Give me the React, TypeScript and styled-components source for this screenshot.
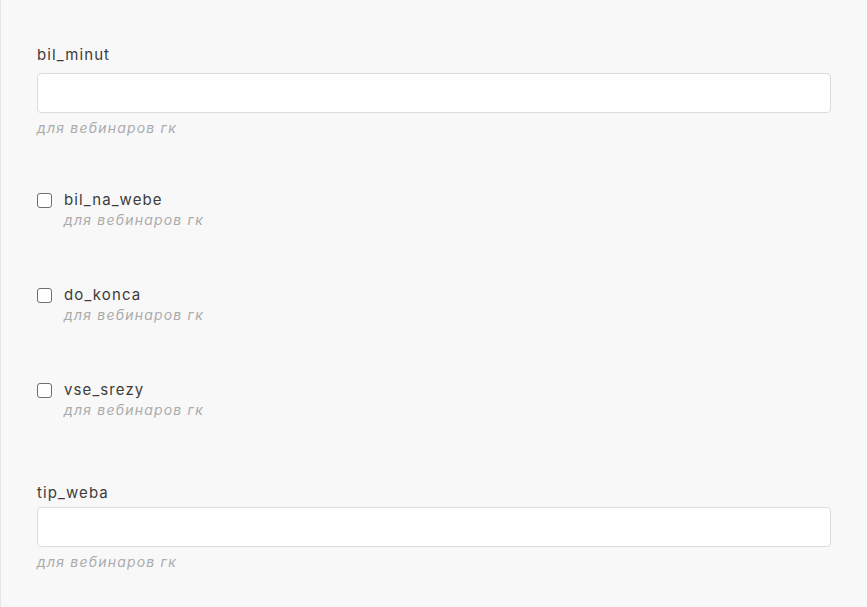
import React from 'react';
import styled, { createGlobalStyle } from 'styled-components';

const GlobalStyle = createGlobalStyle`
  html, body {
    margin: 0;
    padding: 0;
    background: #f8f8f8;
  }
  body {
    font-family: Inter, "Noto Sans", sans-serif;
    color: #3c3c3c;
  }
`;

const Panel = styled.div`
  box-sizing: border-box;
  min-height: 607px;
  border-left: 1px solid #e6e6e6;
  padding: 45px 36px 0 36px;
  display: flex;
  flex-direction: column;
`;

const Field = styled.div<{ $gap: number }>`
  display: flex;
  flex-direction: column;
  margin-bottom: ${({ $gap }) => $gap}px;
`;

const Label = styled.label<{ $tight?: boolean }>`
  font-size: 15px;
  line-height: 20px;
  letter-spacing: 1.1px;
  font-weight: 400;
  color: #3c3c3c;
  margin-bottom: ${({ $tight }) => ($tight ? 4 : 8)}px;
`;

const Input = styled.input`
  box-sizing: border-box;
  height: 40px;
  width: 100%;
  background: #fff;
  border: 1px solid #dcdcdc;
  border-radius: 4px;
  outline: none;
`;

const Hint = styled.div<{ $indent?: boolean }>`
  font-size: 14px;
  line-height: 18px;
  letter-spacing: 1.2px;
  font-style: italic;
  color: #ababab;
  margin-top: 6px;
  padding-left: ${({ $indent }) => ($indent ? 27 : 0)}px;
`;

const CheckRow = styled.label`
  display: flex;
  align-items: center;
  gap: 12px;
  font-size: 15px;
  line-height: 20px;
  letter-spacing: 1.1px;
  color: #3c3c3c;
  margin-top: 1px;
`;

const Box = styled.span`
  box-sizing: border-box;
  width: 15px;
  height: 15px;
  border: 1.5px solid #6f6f6f;
  border-radius: 3px;
  background: #fff;
`;

const CheckHint = styled(Hint)`
  margin-top: 1px;
`;

const hint = 'для вебинаров гк';

const checks = ['bil_na_webe', 'do_konca', 'vse_srezy'];

export default function App() {
  return (
    <>
      <GlobalStyle />
      <Panel>
        <Field $gap={52}>
          <Label>bil_minut</Label>
          <Input />
          <Hint>{hint}</Hint>
        </Field>
        {checks.map((c, i) => (
          <Field key={c} $gap={i === checks.length - 1 ? 64 : 55}>
            <CheckRow>
              <Box />
              {c}
            </CheckRow>
            <CheckHint $indent>{hint}</CheckHint>
          </Field>
        ))}
        <Field $gap={0}>
          <Label $tight>tip_weba</Label>
          <Input />
          <Hint>{hint}</Hint>
        </Field>
      </Panel>
    </>
  );
}
